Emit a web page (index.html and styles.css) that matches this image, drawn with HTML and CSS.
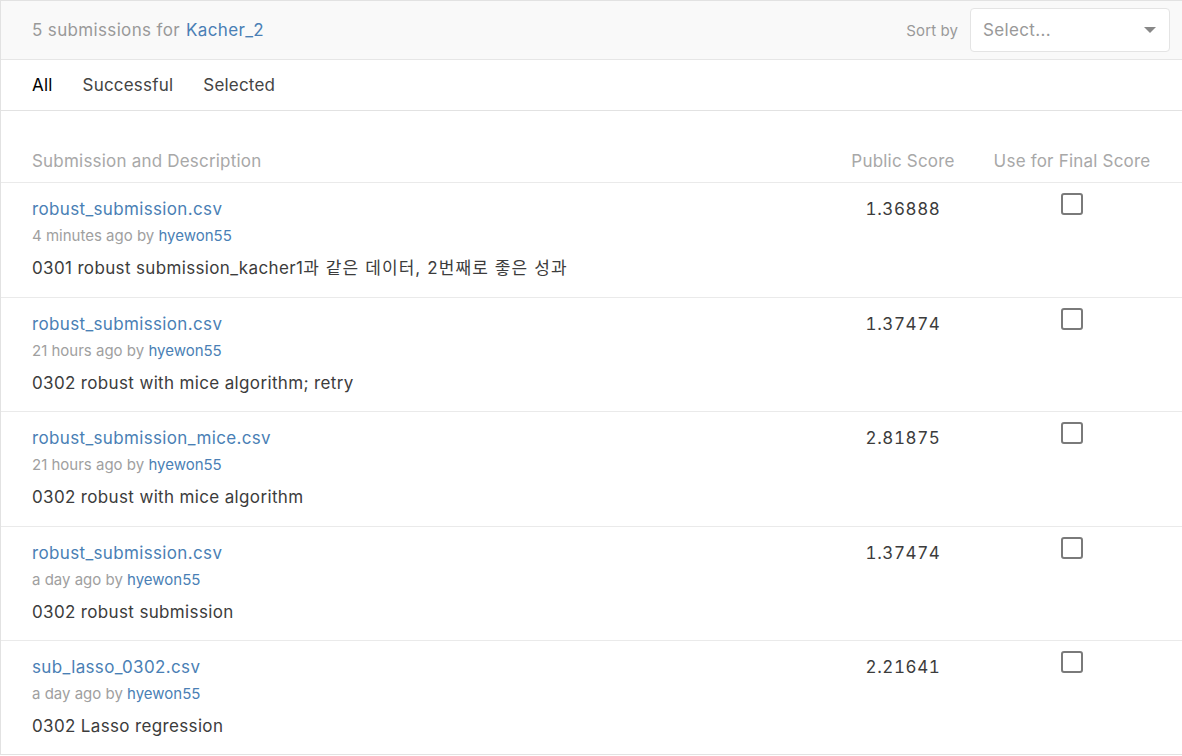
FILE: index.html
```html
<!DOCTYPE html>
<html lang="en">
<head>
<meta charset="utf-8">
<title>Submissions</title>
<link rel="stylesheet" href="styles.css">
</head>
<body>
<div class="panel">
  <header class="topbar">
    <div class="title">5 submissions for <a class="link" href="#">Kacher_2</a></div>
    <div class="sort">
      <span class="sort-label">Sort by</span>
      <div class="select">
        <span class="placeholder">Select...</span>
        <span class="caret"></span>
      </div>
    </div>
  </header>
  <nav class="tabs">
    <span class="tab active">All</span>
    <span class="tab">Successful</span>
    <span class="tab">Selected</span>
  </nav>
  <div class="table">
    <div class="row head">
      <div class="cell">Submission and Description</div>
      <div class="cell center">Public Score</div>
      <div class="cell center">Use for Final Score</div>
    </div>
    <div class="row">
      <div class="cell">
        <a class="file link" href="#">robust_submission.csv</a>
        <div class="meta">4 minutes ago by <a class="link" href="#">hyewon55</a></div>
        <div class="desc">0301 robust submission_kacher1<span class="ko">과 같은 데이터, 2번째로 좋은 성과</span></div>
      </div>
      <div class="cell center score">1.36888</div>
      <div class="cell center"><span class="checkbox"></span></div>
    </div>
    <div class="row">
      <div class="cell">
        <a class="file link" href="#">robust_submission.csv</a>
        <div class="meta">21 hours ago by <a class="link" href="#">hyewon55</a></div>
        <div class="desc">0302 robust with mice algorithm; retry</div>
      </div>
      <div class="cell center score">1.37474</div>
      <div class="cell center"><span class="checkbox"></span></div>
    </div>
    <div class="row">
      <div class="cell">
        <a class="file link" href="#">robust_submission_mice.csv</a>
        <div class="meta">21 hours ago by <a class="link" href="#">hyewon55</a></div>
        <div class="desc">0302 robust with mice algorithm</div>
      </div>
      <div class="cell center score">2.81875</div>
      <div class="cell center"><span class="checkbox"></span></div>
    </div>
    <div class="row">
      <div class="cell">
        <a class="file link" href="#">robust_submission.csv</a>
        <div class="meta">a day ago by <a class="link" href="#">hyewon55</a></div>
        <div class="desc">0302 robust submission</div>
      </div>
      <div class="cell center score">1.37474</div>
      <div class="cell center"><span class="checkbox"></span></div>
    </div>
    <div class="row">
      <div class="cell">
        <a class="file link" href="#">sub_lasso_0302.csv</a>
        <div class="meta">a day ago by <a class="link" href="#">hyewon55</a></div>
        <div class="desc">0302 Lasso regression</div>
      </div>
      <div class="cell center score">2.21641</div>
      <div class="cell center"><span class="checkbox"></span></div>
    </div>
  </div>
</div>
</body>
</html>
```

FILE: styles.css
```css
* { box-sizing: border-box; }
html, body { margin: 0; padding: 0; background: #fff; }
body {
  font-family: Inter, "Noto Sans CJK KR", sans-serif;
  font-size: 17px;
  letter-spacing: 0.35px;
  color: #3c3c3c;
  overflow: hidden;
}
.link { color: #4a7fb5; text-decoration: none; }
.panel {
  width: 100%;
  height: 755px;
  border: 1px solid #e2e2e2;
  border-right: none;
  box-shadow: 0 1px 2px rgba(0,0,0,0.12);
  overflow: hidden;
}
.topbar {
  height: 59px;
  background: #f9f9f9;
  border-bottom: 1px solid #e6e6e6;
  display: flex;
  align-items: center;
  justify-content: space-between;
  padding: 0 12px 0 31px;
}
.title { color: #999; }
.title .link { margin-left: 1px; }
.sort { display: flex; align-items: center; gap: 12px; }
.sort-label { color: #999; font-size: 15px; letter-spacing: 0.1px; }
.select {
  width: 200px;
  height: 44px;
  background: #fff;
  border: 1px solid #e4e4e4;
  border-radius: 4px;
  display: flex;
  align-items: center;
  justify-content: space-between;
  padding: 0 13px 0 12px;
}
.placeholder { color: #999; }
.caret {
  width: 0; height: 0;
  border-left: 6px solid transparent;
  border-right: 6px solid transparent;
  border-top: 6px solid #888;
}
.tabs {
  height: 51px;
  border-bottom: 1px solid #e2e2e2;
  display: flex;
  align-items: center;
  gap: 30px;
  padding: 0 31px 0;
}
.tab { color: #444; letter-spacing: 0.2px; }
.tab.active { color: #000; }
.table { padding-top: 29px; }
.row {
  display: grid;
  grid-template-columns: 1fr 144px 194px;
  padding: 0 13px 0 31px;
  border-bottom: 1px solid #eaeaea;
  height: 114.5px;
}
.row.head {
  height: 43px;
  align-items: center;
  color: #a8a8a8;
  letter-spacing: 0.2px;
}
.row:last-child { border-bottom: none; }
.center { text-align: center; }
.row:not(.head) .cell { padding-top: 15px; }
.file { display: block; line-height: 22px; }
.meta { font-size: 15px; letter-spacing: 0; line-height: 24px; margin-top: 4px; color: #a0a0a0; }
.desc { line-height: 24px; margin-top: 8px; color: #3c3c3c; }
.ko { letter-spacing: 1.1px; }
.score { line-height: 22px; color: #3c3c3c; font-variant-numeric: tabular-nums; letter-spacing: 0.6px; }
.checkbox {
  display: inline-block;
  width: 22px;
  height: 22px;
  border: 2px solid #7a7a7a;
  border-radius: 3px;
  margin-top: -5px;
  vertical-align: top;
}
```
